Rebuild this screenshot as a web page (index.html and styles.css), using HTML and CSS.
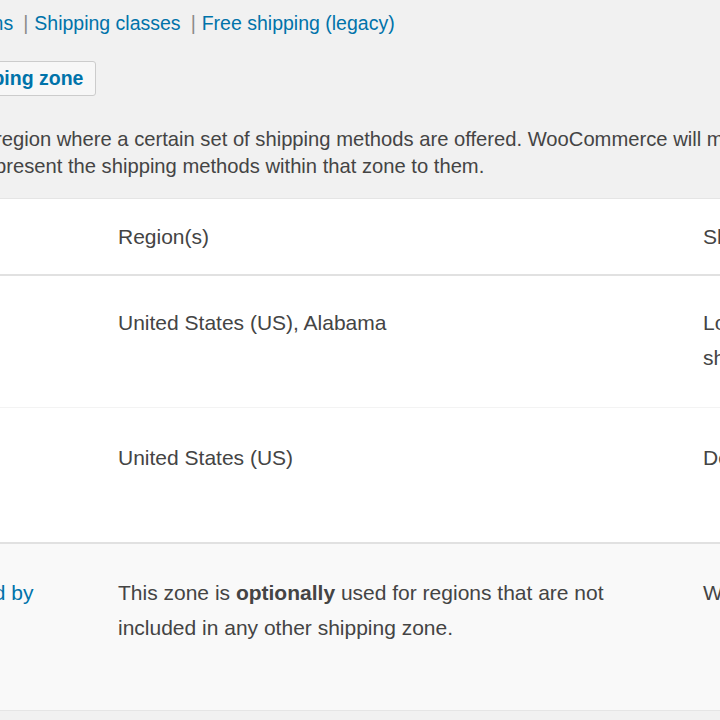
FILE: index.html
```html
<!DOCTYPE html>
<html lang="en">
<head>
<meta charset="utf-8">
<title>Shipping zones</title>
<link rel="stylesheet" href="styles.css">
</head>
<body>
<div class="wrap">
  <ul class="subsubsub">
    <li><a href="#">Shipping options</a><span class="sep">|</span></li>
    <li><a href="#">Shipping classes</a><span class="sep">|</span></li>
    <li><a href="#">Free shipping (legacy)</a></li>
  </ul>

  <div class="heading-row">
    <a class="page-title-action" href="#">Add shipping zone</a>
  </div>

  <p class="desc">
    <span class="line">region where a certain set of shipping methods are offered. WooCommerce will match a customer to a single zone using their shipping address and</span>
    <span class="line">present the shipping methods within that zone to them.</span>
  </p>

  <div class="zones">
    <div class="row head">
      <div class="cell first">Zone name</div>
      <div class="cell">Region(s)</div>
      <div class="cell">Shipping method(s)</div>
    </div>
    <div class="row zone zone-1">
      <div class="cell first"><a class="zone-link" href="#">Alabama</a></div>
      <div class="cell">United States (US), Alabama</div>
      <div class="cell methods">Local pickup, Free shipping</div>
    </div>
    <div class="row zone zone-2">
      <div class="cell first"><a class="zone-link" href="#">United States</a></div>
      <div class="cell">United States (US)</div>
      <div class="cell methods">Domestic Flat Rate</div>
    </div>
    <div class="row zone zone-default">
      <div class="cell first"><a class="zone-link wide" href="#">Locations not covered by your other zones</a></div>
      <div class="cell">This zone is <strong>optionally</strong> used for regions that are not included in any other shipping zone.</div>
      <div class="cell methods">Worldwide Flat Rate</div>
    </div>
  </div>
</div>
</body>
</html>
```

FILE: styles.css
```css
html, body {
  margin: 0;
  padding: 0;
  overflow: hidden;
  background: #f1f1f1;
}

body {
  width: 720px;
  height: 720px;
  font-family: "Liberation Sans", Arial, Helvetica, sans-serif;
  color: #444;
}

a {
  color: #0073aa;
  text-decoration: none;
}

.wrap {
  white-space: nowrap;
}

/* Sub navigation */
.subsubsub {
  display: flex;
  list-style: none;
  margin: 10px 0 0 -133px;
  padding: 0;
  font-size: 19.5px;
  line-height: 26px;
  color: #8a8a8a;
}

.subsubsub a {
  padding: 0 2px;
}

.subsubsub .sep {
  margin: 0 4px 0 8px;
}

/* Add zone button */
.heading-row {
  margin: 25px 0 0 -103px;
  display: flex;
}

.page-title-action {
  box-sizing: border-box;
  height: 35px;
  line-height: 33px;
  padding: 0 12px 0 11px;
  border: 1px solid #ccc;
  border-radius: 3px;
  background: #f7f7f7;
  font-size: 19.5px;
  font-weight: 700;
  color: #0073aa;
}

/* Description */
.desc {
  margin: 30px 0 0 -5px;
  font-size: 20.2px;
  line-height: 27px;
  color: #444;
}

.desc .line {
  display: block;
}

/* Zones table */
.zones {
  margin: 18px 0 0 -220px;
  width: max-content;
  border-top: 1px solid #e5e5e5;
  background: #fff;
  font-size: 21px;
  line-height: 35px;
}

.row {
  display: grid;
  grid-template-columns: 318px 585px 260px;
  box-sizing: border-box;
}

.cell {
  padding: 0 20px;
  white-space: normal;
}

.head {
  height: 77px;
  align-items: center;
  border-bottom: 2px solid #e1e1e1;
}

.zone {
  align-items: start;
}

.zone-1 {
  height: 132px;
  padding-top: 29px;
  border-bottom: 1px solid #f3f3f3;
}

.zone-2 {
  height: 136px;
  padding-top: 32px;
  border-bottom: 2px solid #e1e1e1;
}

.zone-default {
  height: 167px;
  padding-top: 31px;
  background: #f9f9f9;
  border-bottom: 1px solid #e5e5e5;
}

.zone-link {
  display: block;
  max-width: 250px;
}

.zone-default strong {
  font-weight: 700;
  color: #444;
}
```
